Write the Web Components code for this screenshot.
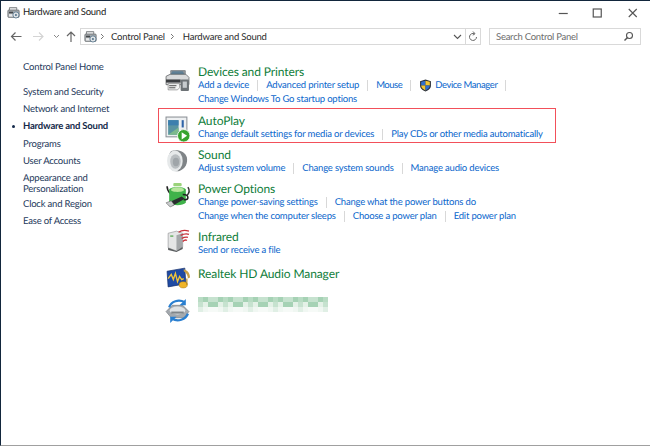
<!DOCTYPE html>
<html>
<head>
<meta charset="utf-8">
<title>Hardware and Sound</title>
<style>
  html, body { margin: 0; padding: 0; background: #fff; }
  body { font-family: Lato, "Open Sans", sans-serif; text-rendering: geometricPrecision; width: 650px; height: 446px; overflow: hidden; }
</style>
</head>
<body>
<cp-window>
  <cp-titlebar slot="top">Hardware and Sound</cp-titlebar>
  <cp-addressbar slot="top"></cp-addressbar>
  <cp-nav slot="nav">
    <cp-nav-item style="margin-bottom:7.7px">Control Panel Home</cp-nav-item>
    <cp-nav-item>System and Security</cp-nav-item>
    <cp-nav-item>Network and Internet</cp-nav-item>
    <cp-nav-item current>Hardware and Sound</cp-nav-item>
    <cp-nav-item>Programs</cp-nav-item>
    <cp-nav-item>User Accounts</cp-nav-item>
    <cp-nav-item style="margin-bottom:-2px">Appearance and Personalization</cp-nav-item>
    <cp-nav-item>Clock and Region</cp-nav-item>
    <cp-nav-item>Ease of Access</cp-nav-item>
  </cp-nav>
  <cp-category icon="devices" heading="Devices and Printers" style="--icon-y:3px">
    <cp-link sep>Add a device</cp-link>
    <cp-link sep>Advanced printer setup</cp-link>
    <cp-link sep style="letter-spacing:-.5px">Mouse</cp-link>
    <cp-link sep shield style="letter-spacing:-.4px">Device Manager</cp-link>
    <cp-link>Change Windows To Go startup options</cp-link>
  </cp-category>
  <cp-category icon="autoplay" heading="AutoPlay" marked style="--icon-y:2px;margin-top:1.5px">
    <cp-link sep>Change default settings for media or devices</cp-link>
    <cp-link>Play CDs or other media automatically</cp-link>
  </cp-category>
  <cp-category icon="sound" heading="Sound" style="--icon-y:1px">
    <cp-link sep>Adjust system volume</cp-link>
    <cp-link sep>Change system sounds</cp-link>
    <cp-link>Manage audio devices</cp-link>
  </cp-category>
  <cp-category icon="power" heading="Power Options">
    <cp-link sep>Change power-saving settings</cp-link>
    <cp-link>Change what the power buttons do</cp-link>
    <cp-link sep>Change when the computer sleeps</cp-link>
    <cp-link sep>Choose a power plan</cp-link>
    <cp-link>Edit power plan</cp-link>
  </cp-category>
  <cp-category icon="infrared" heading="Infrared" style="--icon-y:-3px">
    <cp-link>Send or receive a file</cp-link>
  </cp-category>
  <cp-category icon="realtek" heading="Realtek HD Audio Manager" style="--icon-y:-2px;margin-top:3.5px"></cp-category>
  <cp-category icon="sync" style="--icon-y:1px"><cp-mosaic slot="title"></cp-mosaic></cp-category>
</cp-window>

<script>
const ICONS = {
  devices: `<rect x="5" y="2" width="15" height="5" rx="1" fill="#8d9296"/><path d="M7 3h10l2 4H5z" fill="#5f7f95"/>
    <path d="M1 8l4-2h15l3 3v7H1z" fill="#d9dadb" stroke="#55585b" stroke-width=".7"/>
    <path d="M1 11h14v3H1z" fill="#3a3c3f"/><path d="M3 15h11v4l-2 2H3z" fill="#f4f4f4" stroke="#777" stroke-width=".6"/>
    <rect x="15" y="11" width="8" height="11" rx="1" fill="#6d7276"/><rect x="17" y="13" width="4" height="6" fill="#c7cbce"/>
    <path d="M4 17h7M4 19h6" stroke="#444" stroke-width=".9"/>`,
  autoplay: `<rect x="1" y="1" width="20" height="19" fill="#eef0f2" stroke="#8b9096" stroke-width="1"/>
    <rect x="3" y="4" width="10" height="14" fill="#5a94a2"/><rect x="3" y="4" width="10" height="5" fill="#3d7fae"/><path d="M3 18l10-7v7z" fill="#7cb98d"/>
    <rect x="16" y="4" width="2" height="7" fill="#2f63a8"/><rect x="16" y="13" width="2" height="2" fill="#444"/>
    <circle cx="18" cy="19" r="6" fill="#37a32e" stroke="#fff" stroke-width=".8"/><path d="M16 15.500l5.200 3.500-5.200 3.500z" fill="#fff"/>`,
  sound: `<path d="M6 2c6-2 13 0 15 6 1 5-1 11-7 13-4 1-8 0-10-4-2-5-1-12 2-15z" fill="#7f8487"/>
    <ellipse cx="9.500" cy="11.500" rx="7.500" ry="10" fill="#e6e9ea"/>
    <ellipse cx="10" cy="12" rx="5" ry="7" fill="#b9bec1"/><ellipse cx="10.500" cy="12.500" rx="3" ry="4" fill="#9fa5a9"/>`,
  power: `<path d="M2 4c0 4 1 5 3 7" fill="none" stroke="#222" stroke-width="1.500"/><path d="M22 5c2 3 1 6-1 8" fill="none" stroke="#333" stroke-width="1.400"/>
    <rect x="8" y="1" width="8" height="3" rx="1" fill="#9bd37b"/>
    <path d="M4 7c3-3 13-3 16 0v13c-3 3-13 3-16 0z" fill="#3fb24a"/><path d="M6 6.500c3-2 9-2 12 0v2c-3 1.500-9 1.500-12 0z" fill="#b7e59c"/>
    <path d="M3 20l13-6 3 2-12 7H4z" fill="#2a2d2f"/><path d="M1 20l5-2 3 4-4 2z" fill="#c9cccd" stroke="#555" stroke-width=".5"/><path d="M17 12c3 0 5 1 5 3s-2 2-4 2" fill="none" stroke="#222" stroke-width="1.500"/>`,
  infrared: `<path d="M3 6l8-2 6 2v13l-6 4-8-3z" fill="#e5e6e6" stroke="#8e9192" stroke-width=".6"/><path d="M11 8l6-2v13l-6 4z" fill="#a5a8aa"/>
    <rect x="5" y="8" width="3" height="1.500" fill="#6fb36b"/><path d="M3 20l8 3 6-4v2l-6 3-8-2z" fill="#5a5d5f"/>
    <path d="M13 5c3-2 7-2 10-1M15 8c2-1 5-2 8-1M16 11c2-1 4-2 6-1M17 14c1-1 3-2 4-1" fill="none" stroke="#c8313a" stroke-width="1.300"/>`,
  realtek: `<path d="M2 6l17-3 1 15-17 3z" fill="#1f4aa3" stroke="#16306e" stroke-width=".7"/>
    <path d="M3 13l3-4 2 5 2-6 2 8 2-5 2 3 2-1" fill="none" stroke="#f2c53a" stroke-width="1.300"/>
    <path d="M18 4c4 1 6 4 6 8l-2 1c0-3-2-6-4-7z" fill="#c9a044"/><ellipse cx="17.500" cy="19" rx="4" ry="3" fill="#f0b428" stroke="#a87a12" stroke-width=".5"/><path d="M21 19V13" stroke="#a87a12" stroke-width="1"/>`,
  sync: `<path d="M1 13l6-6h10l6 6-5 6H6z" fill="#a4a9ae" stroke="#6f7479" stroke-width=".6"/><ellipse cx="12" cy="12" rx="7.500" ry="3.800" fill="#dfe2e4"/><path d="M6 13h12v2H6z" fill="#7f8589"/>
    <path d="M4 9c2-6 9-8 15-5" fill="none" stroke="#2a7fd0" stroke-width="2.200"/><path d="M20 1v6h-6z" fill="#2a7fd0"/>
    <path d="M22 15c-2 6-10 8-15 5" fill="none" stroke="#2a7fd0" stroke-width="2.200"/><path d="M5 24v-6h6z" fill="#2a7fd0"/>`,
  shield: `<path d="M12 1l10 3v8c0 6-5 9-10 11C7 21 2 18 2 12V4z" fill="#2b2f36"/>
    <path d="M12 3v9H4V5z" fill="#2f6fd0"/><path d="M12 3l8 2v7h-8z" fill="#f4c530"/><path d="M4 12h8v9c-4-2-8-4-8-9z" fill="#f4c530"/><path d="M12 12h8c0 5-4 7-8 9z" fill="#2f6fd0"/>`,
  small: `<path d="M3 5V2h9v3" fill="#e5e6e7" stroke="#6c7073"/><rect x="1" y="5" width="14" height="9" rx="1" fill="#a7abae" stroke="#5d6164" stroke-width=".8"/>
    <rect x="2.500" y="7" width="5" height="2" fill="#44484b"/><rect x="2.500" y="10" width="5" height="3" fill="#e9eaeb"/>
    <circle cx="11" cy="11" r="3.800" fill="#dfe3e6" stroke="#4f6f86" stroke-width="1"/><circle cx="11" cy="11" r="1.200" fill="#4f6f86"/>`
};

class CpIcon extends HTMLElement {
  constructor() {
    super();
    this.attachShadow({ mode: 'open' });
  }
  connectedCallback() {
    const name = this.getAttribute('name');
    const vb = name === 'small' ? '0 0 16 16' : '0 0 24 24';
    this.shadowRoot.innerHTML = `
      <style>:host { display: block; width: 100%; height: 100%; } svg { display: block; width: 100%; height: 100%; overflow: visible; }</style>
      <svg viewBox="${vb}">${ICONS[name]}</svg>`;
  }
}

class CpWindow extends HTMLElement {
  constructor() {
    super();
    this.attachShadow({ mode: 'open' }).innerHTML = `
      <style>
        :host { display: flex; flex-direction: column; width: 650px; height: 446px; box-sizing: border-box; background: #fff;
                border-top: 1px solid #12263c; border-left: 1px solid #12263c; border-bottom: 1px solid #a0a0a0; }
        .body { display: grid; grid-template-columns: 157px 1fr; flex: 1; padding-top: 13px; }
        .main { display: flex; flex-direction: column; gap: 6.500px; padding: 7px 0 0 7px; }
      </style>
      <slot name="top"></slot>
      <div class="body">
        <slot name="nav"></slot>
        <div class="main"><slot></slot></div>
      </div>`;
  }
}

class CpTitlebar extends HTMLElement {
  constructor() {
    super();
    this.attachShadow({ mode: 'open' }).innerHTML = `
      <style>
        :host { display: flex; align-items: center; height: 23px; padding-left: 6px; font-size: 9.500px; letter-spacing: -.25px; color: #1a1a1a; }
        cp-icon { width: 13px; height: 13px; margin-right: 3px; flex: none; }
        .title { flex: 1; }
        .ctl { display: flex; align-items: center; margin-right: 1px; }
        .ctl svg { display: block; width: 34.500px; height: 12px; }
      </style>
      <cp-icon name="small"></cp-icon>
      <span class="title"><slot></slot></span>
      <div class="ctl">
        <svg viewBox="0 0 33 12"><path d="M12 6.500h9" stroke="#555" stroke-width="1.200"/></svg>
        <svg viewBox="0 0 33 12"><rect x="12.500" y="2" width="8" height="8" fill="none" stroke="#555" stroke-width="1.200"/></svg>
        <svg viewBox="0 0 33 12"><path d="M13 2l8 8M21 2l-8 8" stroke="#555" stroke-width="1.100"/></svg>
      </div>`;
  }
}

class CpAddressbar extends HTMLElement {
  constructor() {
    super();
    this.attachShadow({ mode: 'open' }).innerHTML = `
      <style>
        :host { display: flex; align-items: center; height: 17px; margin-top: 4px; font-size: 9.500px; letter-spacing: -.2px; color: #2b2b2b; }
        .navs { width: 79px; height: 17px; flex: none; display: block; }
        .box { box-sizing: border-box; height: 17px; border: 1px solid #d9d9d9; display: flex; align-items: center; }
        .path { width: 401px; flex: none; padding-left: 3px; }
        .path cp-icon { width: 13px; height: 13px; flex: none; }
        .crumb { margin: 0 5px 0 8px; padding-top: 1px; white-space: nowrap; }
        .grow { flex: 1; }
        .drop { width: 16px; height: 15px; flex: none; border-right: 1px solid #d9d9d9; display: block; }
        .ref { width: 14px; height: 15px; flex: none; display: block; }
        .search { width: 152px; margin-left: 8px; flex: none; padding: 0 6px 0 6px; color: #6d6d6d; justify-content: space-between; }
        .search span { padding-top: 1px; letter-spacing: -.25px; }
        .search svg { width: 11px; height: 11px; display: block; }
      </style>
      <svg class="navs" viewBox="0 0 79 17">
        <path d="M10.500 8.500h10M14.500 4.500l-4 4 4 4" fill="none" stroke="#666" stroke-width="1.200"/>
        <path d="M32 8.500h10M38 4.500l4 4-4 4" fill="none" stroke="#d4d4d4" stroke-width="1.200"/>
        <path d="M53 7l2.500 2.500L58 7" fill="none" stroke="#888" stroke-width="1"/>
        <path d="M70 14V4M66 8l4-4 4 4" fill="none" stroke="#666" stroke-width="1.200"/>
      </svg>
      <div class="box path">
        <cp-icon name="small"></cp-icon>
        <svg width="5" height="7" viewBox="0 0 5 7" style="margin-left:3px"><path d="M1 1l2.500 2.500L1 6" fill="none" stroke="#777"/></svg>
        <span class="crumb" style="margin-left:6px">Control Panel</span>
        <svg width="5" height="7" viewBox="0 0 5 7"><path d="M1 1l2.500 2.500L1 6" fill="none" stroke="#777"/></svg>
        <span class="crumb">Hardware and Sound</span>
        <span class="grow"></span>
        <svg class="drop" viewBox="0 0 16 15"><path d="M5 6l3.500 3.500L12 6" fill="none" stroke="#555" stroke-width="1.100"/></svg>
        <svg class="ref" viewBox="0 0 14 15"><path d="M10.500 8a3.500 3.500 0 1 1-2-3.200M7 2.500l2 2.200-2.200 1.500" fill="none" stroke="#666" stroke-width="1"/></svg>
      </div>
      <div class="box search">
        <span>Search Control Panel</span>
        <svg viewBox="0 0 11 11"><circle cx="6.500" cy="4.500" r="3" fill="none" stroke="#555" stroke-width="1.100"/><path d="M4.500 6.500L1.500 9.500" stroke="#555" stroke-width="1.400"/></svg>
      </div>`;
  }
}

class CpNav extends HTMLElement {
  constructor() {
    super();
    this.attachShadow({ mode: 'open' }).innerHTML = `
      <style>:host { display: block; padding: 1px 0 0 22px; width: 110px; }</style>
      <slot></slot>`;
  }
}

class CpNavItem extends HTMLElement {
  constructor() {
    super();
    this.attachShadow({ mode: 'open' }).innerHTML = `
      <style>
        :host { display: block; position: relative; font-size: 9.500px; letter-spacing: -.2px; line-height: 11px; padding: 3.100px 0; color: #1e395b; }
        :host([current]) { font-weight: 700; color: #14294a; }
        :host([current])::before { content: ""; position: absolute; left: -11px; top: 7px; width: 3px; height: 3px; border-radius: 50%; background: #14294a; }
      </style>
      <slot></slot>`;
  }
}

class CpCategory extends HTMLElement {
  constructor() {
    super();
    this.attachShadow({ mode: 'open' });
  }
  connectedCallback() {
    this.shadowRoot.innerHTML = `
      <style>
        :host { display: grid; grid-template-columns: 33px 365px; min-height: 21px; position: relative; }
        :host([marked])::before { content: ""; position: absolute; box-sizing: border-box; left: -7px; top: -6px; width: 398px; height: 35px; border: 1.500px solid #f2505a; pointer-events: none; }
        .icon { width: 25px; height: 25px; margin-top: var(--icon-y, 0); }
        .name { font-size: 12px; letter-spacing: -.1px; line-height: 14px; height: 14px; color: #0f7d3a; white-space: nowrap; }
        .links { display: flex; flex-wrap: wrap; }
      </style>
      <div class="icon"><cp-icon name="${this.getAttribute('icon')}"></cp-icon></div>
      <div>
        <div class="name">${this.getAttribute('heading') || ''}<slot name="title"></slot></div>
        <div class="links"><slot></slot></div>
      </div>`;
  }
}

class CpLink extends HTMLElement {
  constructor() {
    super();
    this.attachShadow({ mode: 'open' });
  }
  connectedCallback() {
    const shield = this.hasAttribute('shield') ? '<span class="sh"><cp-icon name="shield"></cp-icon></span>' : '';
    this.shadowRoot.innerHTML = `
      <style>
        :host { display: inline-flex; align-items: center; height: 13.500px; font-size: 9.500px; letter-spacing: -.19px; color: #0a66cc; white-space: nowrap; }
        :host([sep])::after { content: ""; width: 1px; height: 11px; margin: 0 8px; background: #d8d8d8; }
        .sh { width: 13px; height: 13px; margin-right: 3px; }
      </style>
      ${shield}<slot></slot>`;
  }
}

// blurred-out entry in the source picture
class CpMosaic extends HTMLElement {
  constructor() {
    super();
    this.attachShadow({ mode: 'open' });
  }
  connectedCallback() {
    const shades = ['#b9dcc4', '#a6d2b5', '#d5e9da', '#8fc6a2', '#c6e2cf', '#e4f1e7', '#9ccdad'];
    let rects = '';
    for (let y = 0; y < 3; y++) {
      for (let x = 0; x < 26; x++) {
        const k = (x * 7 + y * 11 + (x * x) % 5) % shades.length;
        const o = y === 2 ? 0.35 : 1;
        rects += `<rect x="${x * 5}" y="${y * 5}" width="5" height="5" fill="${shades[k]}" opacity="${o}"/>`;
      }
    }
    this.shadowRoot.innerHTML = `
      <style>:host { display: block; width: 130px; height: 15px; } svg { display: block; filter: blur(.7px); }</style>
      <svg width="130" height="15" viewBox="0 0 130 15">${rects}</svg>`;
  }
}

customElements.define('cp-icon', CpIcon);
customElements.define('cp-window', CpWindow);
customElements.define('cp-titlebar', CpTitlebar);
customElements.define('cp-addressbar', CpAddressbar);
customElements.define('cp-nav', CpNav);
customElements.define('cp-nav-item', CpNavItem);
customElements.define('cp-category', CpCategory);
customElements.define('cp-link', CpLink);
customElements.define('cp-mosaic', CpMosaic);
</script>
</body>
</html>
